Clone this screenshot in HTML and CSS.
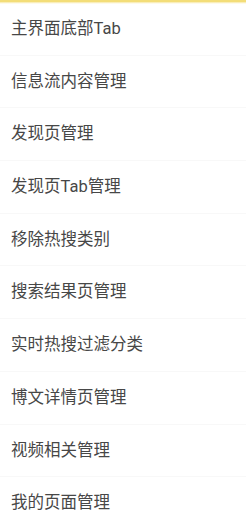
FILE: index.html
```html
<!DOCTYPE html>
<html lang="zh-CN">
<head>
    <meta charset="UTF-8">
    <meta name="viewport" content="width=device-width, initial-scale=1.0">
    <title>设置</title>
    <link rel="stylesheet" href="styles.css">
</head>
<body>
    <div class="toolbar-shadow"></div>
    <ul class="menu">
        <li>主界面底部Tab</li>
        <li>信息流内容管理</li>
        <li>发现页管理</li>
        <li>发现页Tab管理</li>
        <li>移除热搜类别</li>
        <li>搜索结果页管理</li>
        <li>实时热搜过滤分类</li>
        <li>博文详情页管理</li>
        <li>视频相关管理</li>
        <li>我的页面管理</li>
    </ul>
    <p class="note">需要隐藏被删到的动态时，此功能可以帮你去除</p>
</body>
</html>
```
FILE: styles.css
```css
/* Base */
body {
    margin: 0;
    padding: 0;
    background-color: #fff;
    font-family: Roboto, "Noto Sans CJK SC", sans-serif;
    overflow: hidden;
}
/* Yellow toolbar edge */
.toolbar-shadow {
    height: 4px;
    background: linear-gradient(#f3dd78 0, #f3dd78 40%, #fbf3cf 70%, #fff 100%);
}
/* Menu list */
.menu {
    list-style: none;
    margin: -1px 0 0;
    padding: 0;
}
.menu li {
    height: 52.7px;
    line-height: 52px;
    padding-left: 11px;
    font-size: 16.5px;
    color: #474747;
    border-bottom: 1px solid #f8f8f8;
    box-sizing: border-box;
}
.menu li:last-child {
    border-bottom: none;
}
.note {
    margin: -7px 0 0;
    padding-left: 11px;
    font-size: 13px;
    color: #a8a8a8;
    white-space: nowrap;
    overflow: hidden;
}
```
